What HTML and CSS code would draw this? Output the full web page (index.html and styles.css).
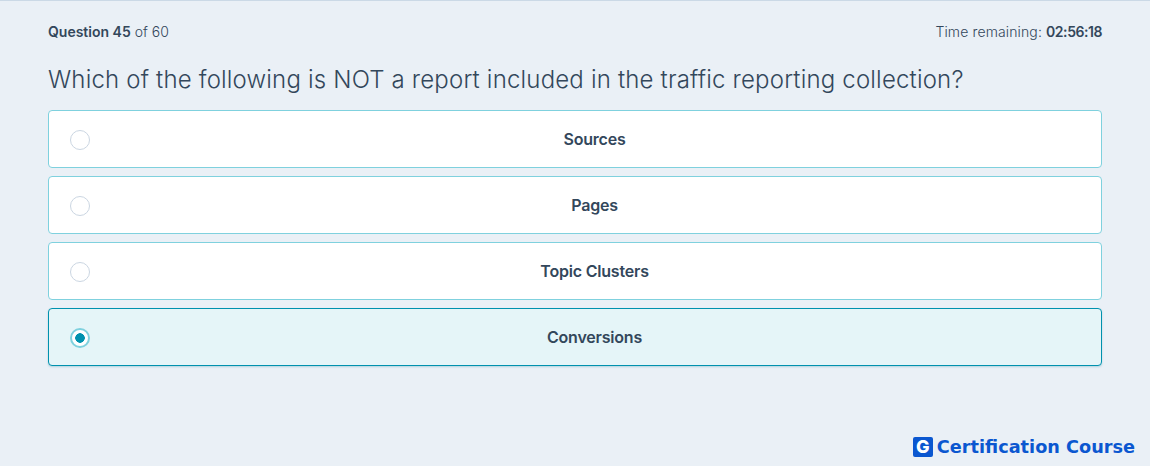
FILE: index.html
```html
<!DOCTYPE html>
<html lang="en">
<head>
<meta charset="utf-8">
<title>Exam question</title>
<link rel="stylesheet" href="styles.css">
</head>
<body>
<main class="exam">
  <header class="meta">
    <div><strong>Question 45</strong> of 60</div>
    <div class="timer">Time remaining: <strong>02:56:18</strong></div>
  </header>
  <h1 class="question">Which of the following is NOT a report included in the traffic reporting collection?</h1>
  <div class="answers">
    <div class="answer"><span class="radio"></span><span class="label">Sources</span></div>
    <div class="answer"><span class="radio"></span><span class="label">Pages</span></div>
    <div class="answer"><span class="radio"></span><span class="label">Topic Clusters</span></div>
    <div class="answer selected"><span class="radio"></span><span class="label">Conversions</span></div>
  </div>
</main>
<footer class="brand">
  <span class="brand-icon">G</span>
  <span class="brand-name">Certification Course</span>
</footer>
</body>
</html>
```
FILE: styles.css
```css
* { box-sizing: border-box; }
html, body { height: 100%; }
body {
  margin: 0;
  height: 466px;
  overflow: hidden;
  background: #eaf0f6;
  border-top: 1px solid #cbd9e6;
  color: #33475b;
  font-family: "Inter", "Liberation Sans", sans-serif;
  display: flex;
  flex-direction: column;
}
.exam { padding: 22px 48px 0; flex: 1; }
.meta {
  display: flex;
  justify-content: space-between;
  font-size: 14px;
  line-height: 18px;
  font-weight: 300;
}
.meta strong { font-weight: 600; }
.timer { letter-spacing: .13px; }
.timer strong { letter-spacing: -.45px; }
.question {
  margin: 22px 0 13px;
  font-size: 24px;
  line-height: 34px;
  font-weight: 300;
  letter-spacing: .18px;
}
.answers { display: flex; flex-direction: column; gap: 8px; }
.answer {
  height: 58px;
  display: flex;
  align-items: center;
  background: #fff;
  border: 1px solid #7fd1de;
  border-radius: 4px;
  padding-left: 21px;
}
.radio {
  width: 20px;
  height: 20px;
  margin-top: 2px;
  border-radius: 50%;
  border: 1px solid #cbd6e2;
  background: #fff;
  flex: none;
}
.label {
  flex: 1;
  padding-right: 2px;
  text-align: center;
  font-size: 16px;
  font-weight: 600;
  letter-spacing: -.2px;
}
.selected {
  background: #e5f5f8;
  border-color: #0091ae;
  box-shadow: 0 1px 2px rgba(0, 131, 155, .25);
}
.selected .radio {
  border: 2px solid #7fd1de;
  background: radial-gradient(circle, #0091ae 0 4.5px, #fff 5px);
}
.brand {
  display: flex;
  align-items: center;
  justify-content: flex-end;
  gap: 4px;
  padding: 0 15px 9px 0;
}
.brand-icon {
  width: 20px;
  height: 20px;
  border-radius: 2px;
  background: #0b57d0;
  color: #fff;
  font-size: 18px;
  font-weight: 800;
  line-height: 20px;
  text-align: center;
}
.brand-name {
  color: #0b57d0;
  font-family: "DejaVu Sans", sans-serif;
  font-size: 17.7px;
  font-weight: 700;
  line-height: 20px;
}
```
